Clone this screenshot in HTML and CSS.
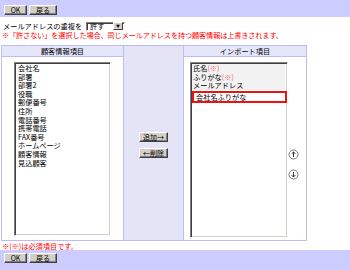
FILE: index.html
```html
<!DOCTYPE html>
<html>
<head>
  <meta charset="UTF-8">
  <meta name="viewport" content="width=device-width, initial-scale=1">
  <title>インポート項目設定</title>
  <link rel="stylesheet" href="styles.css">
</head>
<body>
  <div class="bar bar-top">
    <button class="btn btn-ok">OK</button>
    <button class="btn btn-back">戻る</button>
  </div>
  <div class="dup">
    <span>メールアドレスの重複を</span>
    <span class="select"><span class="select-val">許す</span><span class="select-arrow">▼</span></span>
  </div>
  <div class="warn">※「許さない」を選択した場合、同じメールアドレスを持つ顧客情報は上書きされます。</div>
  <div class="grid">
    <div class="head head-left">顧客情報項目</div>
    <div class="mid">
      <button class="btn btn-move">追加→</button>
      <button class="btn btn-move">←削除</button>
    </div>
    <div class="head head-right">インポート項目</div>
    <div class="cell cell-left">
      <div class="list">
        <div class="item">会社名</div>
        <div class="item">部署</div>
        <div class="item">部署2</div>
        <div class="item">役職</div>
        <div class="item">郵便番号</div>
        <div class="item">住所</div>
        <div class="item">電話番号</div>
        <div class="item">携帯電話</div>
        <div class="item">FAX番号</div>
        <div class="item">ホームページ</div>
        <div class="item">顧客情報</div>
        <div class="item">見込顧客</div>
      </div>
    </div>
    <div class="cell cell-right">
      <div class="list list-right">
        <div class="item fixed">氏名<span class="req">(※)</span></div>
        <div class="item fixed">ふりがな<span class="req">(※)</span></div>
        <div class="item fixed">メールアドレス</div>
        <div class="item selected">会社名ふりがな</div>
      </div>
      <div class="order">
        <svg class="arrow" width="11" height="11" viewBox="0 0 11 11">
          <circle cx="5.5" cy="5.5" r="4.5" fill="#fff" stroke="#777"/>
          <path d="M5.5 8V3M3.6 4.9L5.5 3l1.9 1.9" stroke="#333" fill="none"/>
        </svg>
        <svg class="arrow" width="11" height="11" viewBox="0 0 11 11">
          <circle cx="5.5" cy="5.5" r="4.5" fill="#fff" stroke="#777"/>
          <path d="M5.5 3v5M3.6 6.1L5.5 8l1.9-1.9" stroke="#333" fill="none"/>
        </svg>
      </div>
    </div>
  </div>
  <div class="note">※(※)は必須項目です。</div>
  <div class="bar bar-bottom">
    <button class="btn btn-ok">OK</button>
    <button class="btn btn-back">戻る</button>
  </div>
</body>
</html>
```

FILE: styles.css
```css
body {
  margin: 0;
  font-family: "Noto Sans CJK JP", "DejaVu Sans", sans-serif;
  font-size: 7.2px;
  color: #000000;
  background: #ffffff;
}
.bar {
  display: flex;
  gap: 2px;
  background: #ccccff;
  padding: 5px 4px 0;
  box-sizing: border-box;
}
.bar-top {
  height: 17px;
}
.bar-bottom {
  height: 20px;
  padding-top: 3px;
}
.btn {
  font-family: "Noto Sans CJK JP", "DejaVu Sans", sans-serif;
  font-size: 7px;
  line-height: 8px;
  height: 10px;
  padding: 0;
  background: #d4d0c8;
  color: #000000;
  border: 1px solid;
  border-color: #ffffff #404040 #404040 #ffffff;
  box-shadow: inset -1px -1px #808080;
  cursor: pointer;
}
.btn-ok {
  width: 23px;
}
.btn-back {
  width: 28px;
}
.btn-move {
  width: 29px;
}
.dup {
  display: flex;
  align-items: center;
  gap: 4px;
  height: 10px;
  margin-top: 4px;
  padding-left: 3px;
}
.select {
  display: flex;
  align-items: center;
  justify-content: space-between;
  width: 39px;
  height: 9px;
  box-sizing: border-box;
  border: 1px solid;
  border-color: #808080 #ffffff #ffffff #808080;
  box-shadow: inset 1px 1px #404040;
  background: #ffffff;
  padding: 0 1px 0 3px;
}
.select-arrow {
  display: flex;
  align-items: center;
  justify-content: center;
  width: 8px;
  height: 6px;
  background: #d4d0c8;
  border: 1px solid;
  border-color: #ffffff #404040 #404040 #ffffff;
  font-size: 4px;
}
.warn {
  color: #ff0000;
  height: 8px;
  line-height: 8px;
  padding-left: 2px;
  margin-bottom: 6px;
  white-space: nowrap;
  letter-spacing: -0.15px;
}
.grid {
  display: grid;
  grid-template-columns: 121px 59px 122px;
  grid-template-rows: 10px 183px;
  gap: 1px;
  padding: 1px;
  width: 306px;
  box-sizing: border-box;
  margin-left: 1px;
  background: #bcbcf6;
}
.head {
  background: #e6e6fa;
  text-align: center;
  line-height: 10px;
}
.head-left {
  grid-column: 1;
  grid-row: 1;
}
.head-right {
  grid-column: 3;
  grid-row: 1;
}
.mid {
  grid-column: 2;
  grid-row: 1 / span 2;
  background: #e4e4f6;
  display: flex;
  flex-direction: column;
  align-items: center;
  justify-content: center;
  gap: 6px;
  padding-top: 4px;
}
.cell {
  background: #ffffff;
  grid-row: 2;
  display: flex;
  padding-top: 5px;
}
.cell-left {
  grid-column: 1;
  padding-left: 12px;
}
.cell-right {
  grid-column: 3;
  padding-left: 6px;
}
.list {
  width: 97px;
  height: 174px;
  box-sizing: border-box;
  border: 1px solid;
  border-color: #808080 #ffffff #ffffff #808080;
  box-shadow: inset 1px 1px #404040, inset -1px -1px #d4d0c8;
  padding: 1px 2px 2px 2px;
  background: #ffffff;
}
.list-right {
  width: 98px;
  height: 176px;
  padding-left: 1px;
}
.item {
  line-height: 8.6px;
  height: 8.6px;
  padding-left: 1px;
  white-space: nowrap;
}
.fixed {
  background: #f2f2f2;
}
.req {
  color: #ff6666;
}
.selected {
  border: 2px solid #ee1111;
  height: 8px;
  line-height: 8px;
  margin-top: 1px;
  padding-left: 2px;
  margin-right: -2px;
}
.order {
  display: flex;
  flex-direction: column;
  gap: 9px;
  padding-top: 87px;
}
.arrow {
  display: block;
}
.note {
  color: #ff0000;
  height: 8px;
  line-height: 8px;
  margin-top: 1px;
  padding-left: 2px;
}
```
